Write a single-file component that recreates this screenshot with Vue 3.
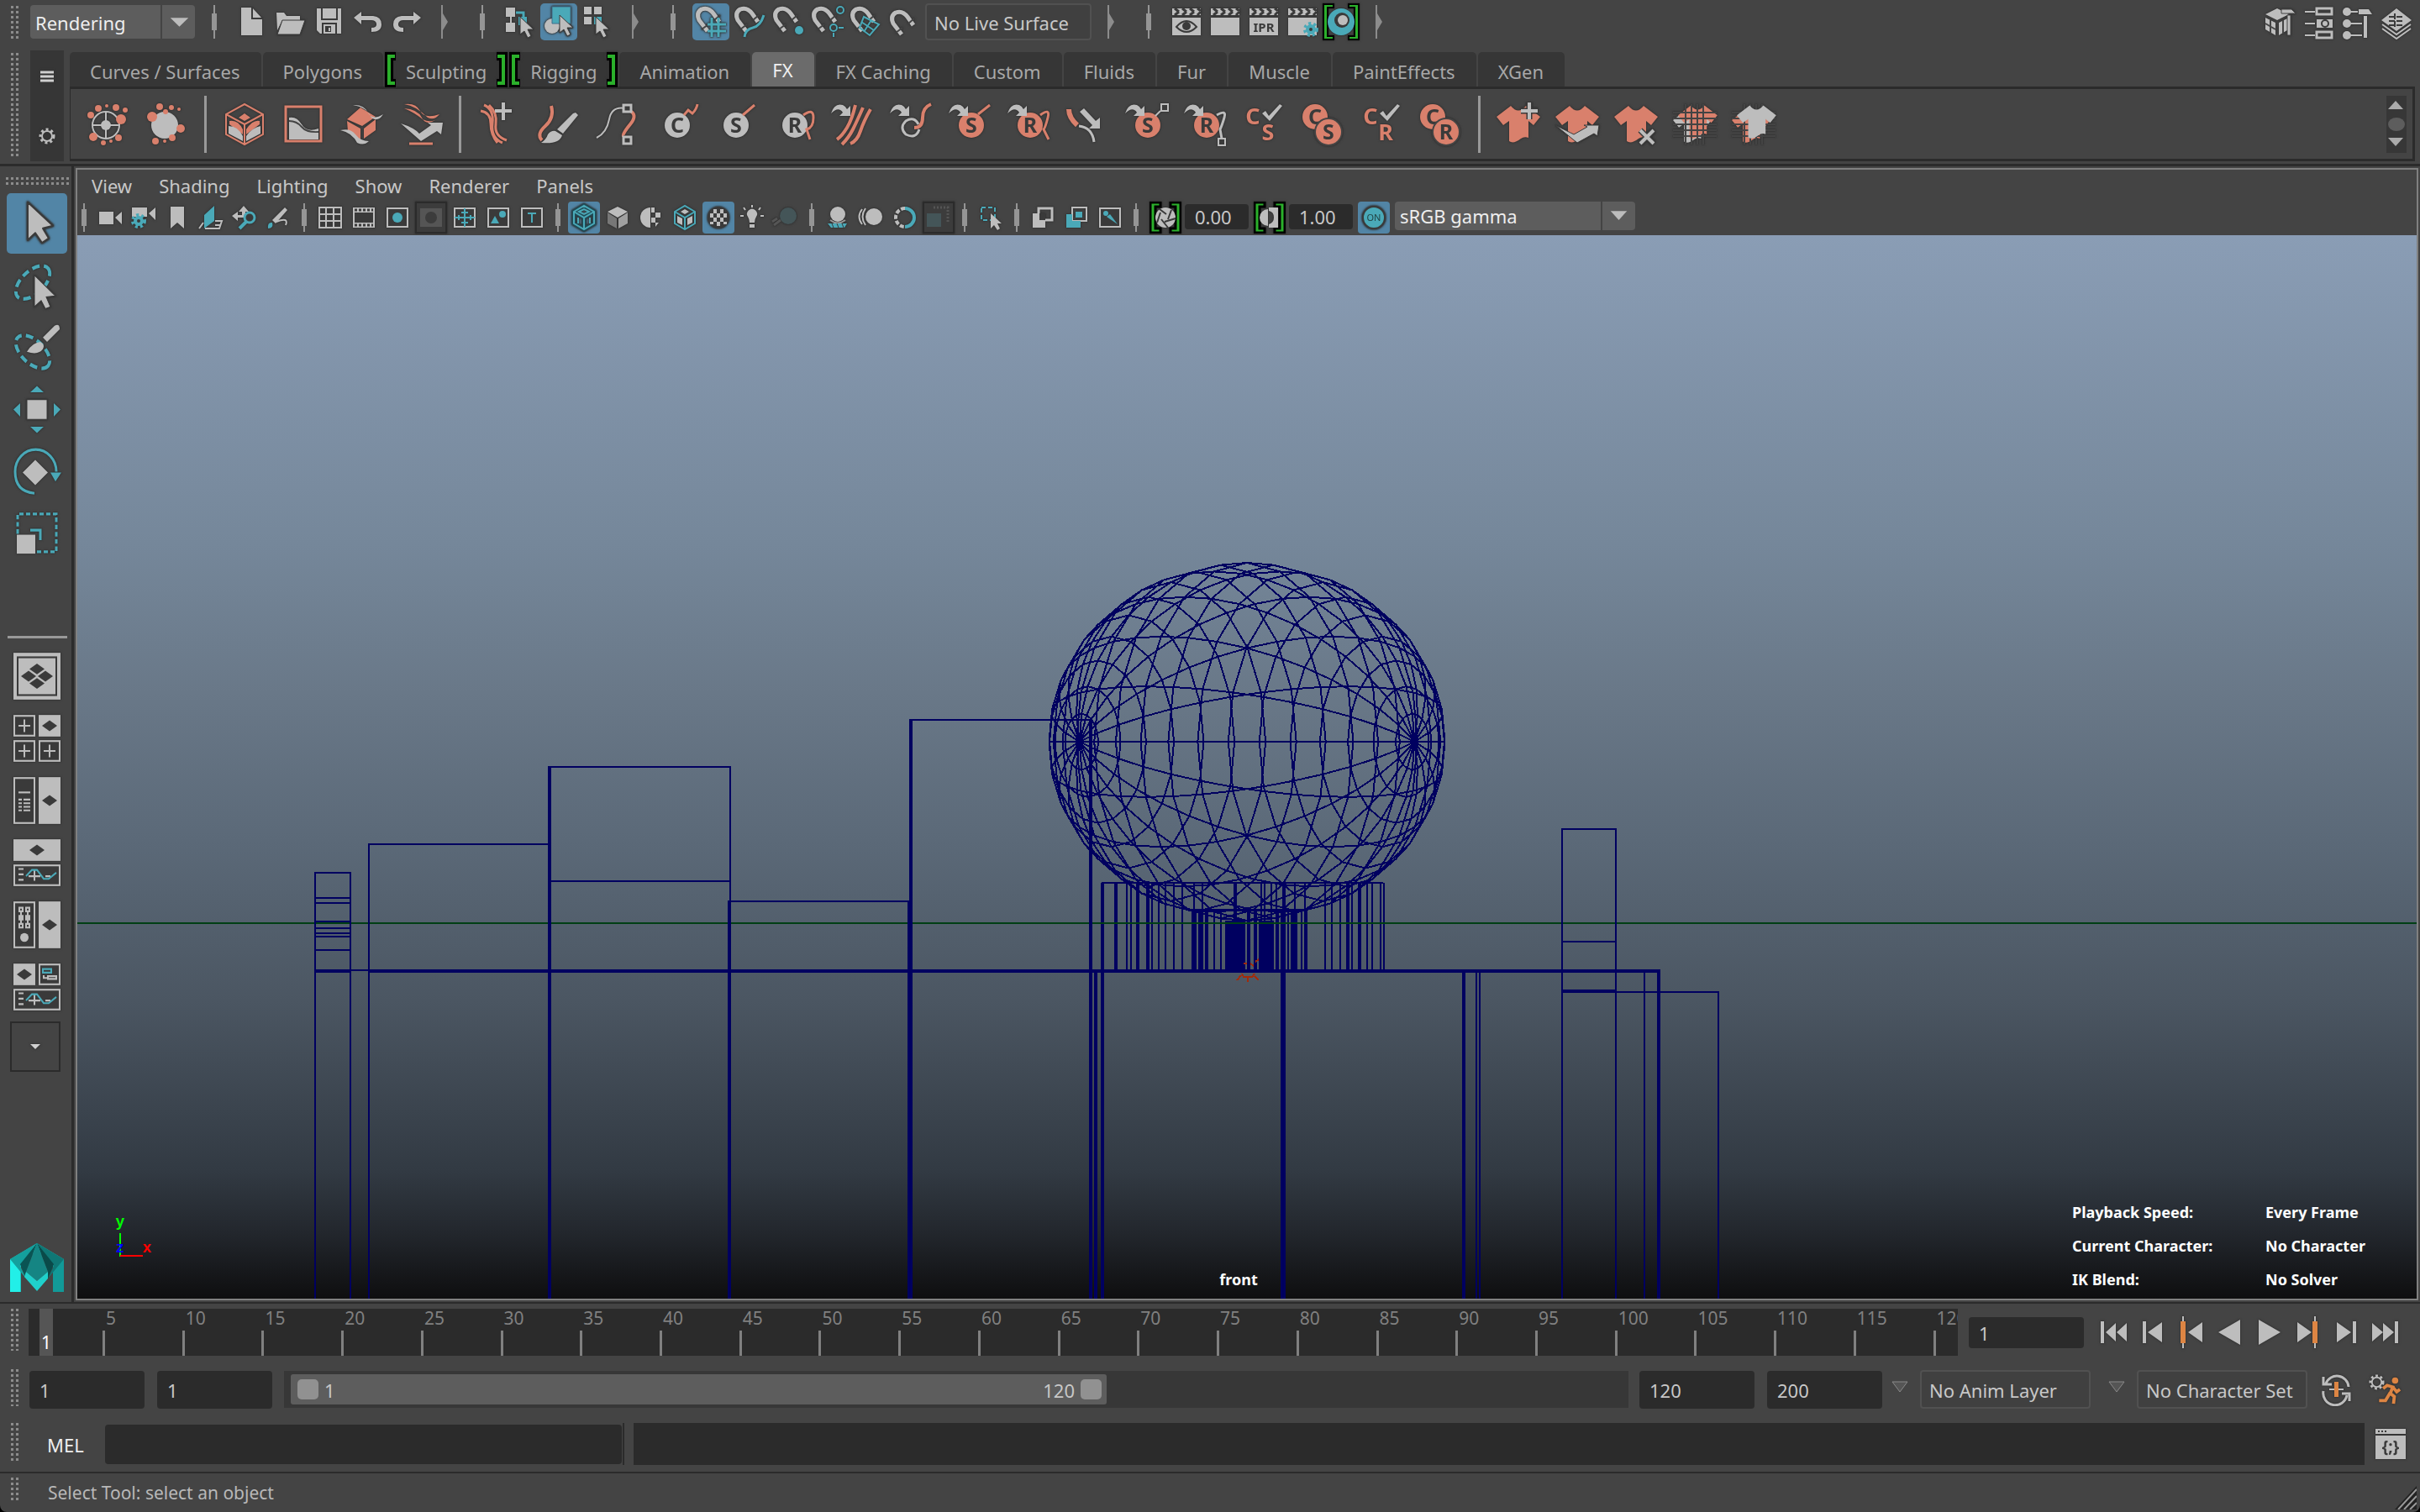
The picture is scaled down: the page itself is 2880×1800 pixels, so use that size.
<script setup>
import { ref } from 'vue'

const G = '#bdbdbd'
const T = '#4aa9b8'
const C = '#d9806c'
const D = '#3a3a3a'
const O = '#dd8543'

const badge = (cx, cy, color, letter, r = 15) =>
  `<circle cx="${cx}" cy="${cy}" r="${r}" fill="${color}"/><text x="${cx}" y="${cy + 9}" font-size="25" font-weight="700" text-anchor="middle" fill="${D}">${letter}</text>`
const letter = (x, y, l) =>
  `<text x="${x}" y="${y}" font-size="27" font-weight="700" text-anchor="middle" fill="${C}">${l}</text>`
const hook = `<path d="M1 13Q5 0 15 3Q19 5 20 8L24 4V16H11L15 12Q10 4 1 13Z" fill="${G}"/>`
const check = `<path d="M24 13L28 10L32 16L45 2L48 4L33 22Z" fill="${G}"/>`
const shirt = (color, t = '') =>
  `<path ${t} d="M17 4Q26 15 35 4L52 17L44 27L38 22V42Q33 40 29 43Q20 50 15 46V22L8 27L0 17Z" fill="${color}"/>`
const weave = 'M0 12H52M0 19H52M0 26H52M0 33H52M0 40H52M15 2V50M22 2V50M29 2V50M36 2V50'

const magnet = `<path d="M18 33L8 20Q4 11 11 7Q19 4 25 12L32 22" fill="none" stroke="${G}" stroke-width="5"/><path d="M11 31L19 25M26 20L33 14" stroke="#444" stroke-width="2"/>`
const clapper = `<path d="M5 17H39V38H5Z" fill="${G}"/><path d="M5 6H39V14H5Z" fill="${G}"/><path d="M8 6l5 4M17 6l5 4M26 6l5 4M35 6l4 3M13 10l-5 4M22 10l-5 4M31 10l-5 4M39 10l-4 4" stroke="${D}" stroke-width="3"/>`
const cursor = (x, y) => `<path transform="translate(${x} ${y})" d="M0 0V21L5 17L9 25L13 23L9 15H16Z" fill="${G}" stroke="${D}" stroke-width="1"/>`
const gear = (cx, cy, r, color, hole) =>
  `<circle cx="${cx}" cy="${cy}" r="${r + 1}" fill="none" stroke="${color}" stroke-width="4" stroke-dasharray="3 3"/><circle cx="${cx}" cy="${cy}" r="${r - 2}" fill="${hole}" stroke="${color}" stroke-width="4"/>`

const icons = {
  newFile: `<path d="M9 5H22L34 18V38H9Z" fill="${G}"/><path d="M22 5V18H34" fill="none" stroke="${D}" stroke-width="2"/>`,
  open: `<path d="M5 11H14L17 15H33V20H12L6 32Z" fill="${G}"/><path d="M12 20H39L33 37H6Z" fill="${G}" stroke="${D}"/>`,
  save: `<path d="M7 6H36V36H11L7 32Z" fill="${G}"/><path d="M13 6V19H31V6M14 36V24H30V36" fill="none" stroke="${D}" stroke-width="2"/><path d="M17 27H24V34H17Z" fill="${D}"/><path d="M21 29h2v4h-2z" fill="${G}"/>`,
  undo: `<path d="M5 17L14 10V15H28Q38 16 38 25Q38 34 26 34V29Q33 29 32 24Q31 20 26 20H14V25Z" fill="${G}"/>`,
  redo: `<path d="M39 17L30 10V15H16Q6 16 6 25Q6 34 18 34V29Q11 29 12 24Q13 20 18 20H30V25Z" fill="${G}"/>`,
  selHier: `<path d="M5 5H16V16H5ZM5 23H16V34H5ZM10 16H12V23H10Z" fill="${G}"/><path d="M17 11H26V18" fill="none" stroke="${T}" stroke-width="3"/><path d="M20 16H30V26H20Z" fill="${T}"/>${cursor(22, 16)}`,
  selObj: `<circle cx="14" cy="27" r="9" fill="${G}"/><path d="M14 4H36V24H14Z" fill="${T}" stroke="#3f6f8c" stroke-width="1"/>${cursor(23, 14)}`,
  selComp: `<path d="M6 4H15V13H6ZM18 4H27V13H18ZM6 16H15V25H6Z" fill="${G}"/><path d="M18 16H27V25H18Z" fill="${T}"/>${cursor(20, 16)}`,
  snapGrid: magnet + `<path d="M23 17V40M31 17V40M18 25H40M18 33H40" stroke="${T}" stroke-width="3"/>`,
  snapCurve: magnet + `<path d="M16 40Q17 31 26 29T39 14" fill="none" stroke="${T}" stroke-width="3"/>`,
  snapPoint: magnet + `<circle cx="35" cy="32" r="5" fill="${T}"/>`,
  snapProj: magnet + `<circle cx="38" cy="8" r="4" fill="none" stroke="${T}" stroke-width="2"/><circle cx="30" cy="29" r="4" fill="none" stroke="${T}" stroke-width="2"/><path d="M36 29H42M30 35V40" stroke="${T}" stroke-width="2"/>`,
  snapView: magnet + `<path d="M20 16L38 25L27 38L15 29ZM17 22L32 32M29 20L20 34" fill="none" stroke="${T}" stroke-width="2"/>`,
  live: `<g transform="translate(1 4)">${magnet}</g>`,
  renderView: clapper + `<path d="M10 28Q22 14 34 28Q22 40 10 28Z" fill="none" stroke="${D}" stroke-width="2"/><circle cx="22" cy="27" r="5" fill="${D}"/>`,
  render: clapper,
  ipr: clapper + `<text x="22" y="34" font-size="15" font-weight="700" text-anchor="middle" fill="${D}">IPR</text>`,
  renderSet: clapper + gear(32, 31, 6, T, D),
  hyper: `<path d="M1 1H13V5H6V39H13V43H1ZM43 1H31V5H38V39H31V43H43Z" fill="#2bb02b" stroke="#000" stroke-width="2"/><circle cx="22" cy="22" r="16" fill="${T}"/><circle cx="23" cy="20" r="9" fill="${D}"/><circle cx="24" cy="20" r="6" fill="${G}"/>`,
  model: `<path d="M4 13L18 6L32 13L18 20Z" fill="${G}"/><path d="M4 17L16 23V38L4 31ZM20 23L30 18V32L20 38Z" fill="${G}"/><path d="M10 20V36M4 24L16 31M25 20V36" stroke="#444" stroke-width="2"/><path d="M23 7H35L40 12H23ZM30 14H34V38H30Z" fill="${G}" stroke="#444" stroke-width="1"/>`,
  attr: `<path d="M5 10H17M5 24H17M5 38H17" stroke="${G}" stroke-width="2"/><path d="M19 6H37V13H19ZM19 34H37V41H19Z" fill="none" stroke="${G}" stroke-width="3"/><path d="M19 19H38V29H19Z" fill="${G}"/><circle cx="29" cy="24" r="4" fill="${G}" stroke="${D}" stroke-width="2"/>`,
  toolset: `<g fill="${G}"><circle cx="9" cy="10" r="5"/><circle cx="9" cy="24" r="5"/><circle cx="9" cy="38" r="5"/><path d="M13 9H22V11H13ZM13 23H27V25H13ZM13 37H27V39H13ZM23 7H35L39 13H23ZM29 15H33V41H29Z"/></g>`,
  layers: `<path d="M22 6L40 20L22 33L4 20Z" fill="${G}"/><path d="M5 25L22 37L39 25M5 30L22 42L39 30" fill="none" stroke="${G}" stroke-width="2"/><path d="M13 16H31M13 21H31M13 26H31M20 12V29" stroke="${D}" stroke-width="2" stroke-dasharray="7 2"/>`,

  emitter: `<circle cx="24" cy="27" r="16" fill="none" stroke="${G}" stroke-width="2"/><path d="M24 11V43M8 27H40" stroke="${G}" stroke-width="2"/><circle cx="24" cy="27" r="6" fill="${G}"/><g fill="${C}"><circle cx="6" cy="15" r="4"/><circle cx="15" cy="7" r="4"/><circle cx="25" cy="4" r="2"/><circle cx="36" cy="6" r="4"/><circle cx="47" cy="9" r="3"/><circle cx="42" cy="20" r="6"/><circle cx="9" cy="41" r="5"/><circle cx="21" cy="48" r="3"/><circle cx="30" cy="46" r="2"/><circle cx="39" cy="42" r="4"/></g>`,
  emitObj: `<circle cx="24" cy="27" r="16" fill="${G}"/><g fill="${C}"><circle cx="9" cy="17" r="6"/><circle cx="18" cy="5" r="4"/><circle cx="25" cy="11" r="3"/><circle cx="32" cy="6" r="3"/><circle cx="41" cy="8" r="2"/><circle cx="43" cy="31" r="5"/><circle cx="13" cy="46" r="4"/><circle cx="24" cy="46" r="2"/><circle cx="33" cy="42" r="4"/></g>`,
  fluidBox: `<path d="M4 14V38L26 50L48 38V14L26 2ZM4 14L26 26L48 14M26 26V50" fill="none" stroke="${C}" stroke-width="2"/><path d="M26 13L33 18L26 22L19 18ZM8 22Q18 20 24 32V38L8 26ZM44 22Q36 20 28 32V38L44 26Z" fill="${C}"/><path d="M7 28Q18 28 24 40V46L7 37ZM45 28Q35 30 28 40V46L45 37Z" fill="${G}"/>`,
  pond: `<rect x="5" y="5" width="42" height="41" fill="none" stroke="${C}" stroke-width="3"/><path d="M9 18Q18 16 24 26T44 31V44H9Z" fill="${G}"/><path d="M9 22Q18 22 24 29T44 35" fill="none" stroke="#444" stroke-width="2"/>`,
  fluidObj: `<path d="M8 20L24 6L42 17L26 28ZM8 22L24 31V44L9 35ZM28 31L42 20V33L28 43Z" fill="${C}"/><path d="M15 3Q28 2 33 12T51 14Q45 24 37 18Q32 6 15 3ZM0 33Q12 30 18 38T34 46Q28 52 20 48Q14 36 0 33Z" fill="${G}"/>`,
  collide: `<path d="M6 2Q20 0 25 10T48 14Q42 22 34 18Q20 4 6 2ZM6 7Q22 8 27 18T43 21Q36 24 28 20Q18 12 6 7Z" fill="${C}"/><path d="M2 25Q18 30 24 37L38 27L34 24L52 24L50 38L45 34L26 46Z" fill="${G}"/><path d="M12 49H40" stroke="${C}" stroke-width="3"/>`,
  hairPlus: `<path d="M8 3Q20 8 18 25T30 48M14 3Q24 12 22 26T35 45M4 10Q16 12 16 25T24 48" fill="none" stroke="${C}" stroke-width="3"/><path d="M31 0V21M21 10H41" stroke="${G}" stroke-width="4"/>`,
  paintHair: `<path d="M18 4Q22 18 11 28T7 45" fill="none" stroke="${C}" stroke-width="4"/><path d="M47 12L50 15L32 37L25 32L44 13Z" fill="${G}"/><path d="M23 34L31 39Q28 50 6 48Q12 44 14 38Q18 33 23 34Z" fill="${G}"/>`,
  hairPt: `<path d="M2 42Q14 36 17 20T36 7" fill="none" stroke="${G}" stroke-width="2"/><path d="M40 9Q52 14 42 26T34 40" fill="none" stroke="${C}" stroke-width="4"/><path d="M34 3H43V11H34ZM34 41H43V49H34Z" fill="${D}" stroke="${G}" stroke-width="3"/>`,
  cNew: badge(28, 27, G, 'C') + `<path d="M36 15L41 9L46 13Q51 8 52 2" fill="none" stroke="${C}" stroke-width="3"/>`,
  sNew: badge(28, 27, G, 'S') + `<path d="M36 15L50 3" stroke="${C}" stroke-width="3"/>`,
  rNew: badge(28, 27, G, 'R') + `<path d="M38 15Q50 6 50 18T42 32L46 44" fill="none" stroke="${C}" stroke-width="3"/>`,
  hairCollide: hook + `<path d="M30 3Q26 20 20 30T8 44M39 6Q32 22 27 32T14 50M48 8Q40 22 36 34T24 49" fill="none" stroke="${C}" stroke-width="4"/>`,
  curlGet: hook + `<path d="M50 2Q40 6 40 18T30 30" fill="none" stroke="${C}" stroke-width="4"/><path d="M36 32Q32 44 20 38Q12 30 20 22Q30 16 35 26" fill="none" stroke="${G}" stroke-width="3"/>`,
  sGet: badge(28, 27, C, 'S') + `<path d="M36 14L50 3" stroke="${C}" stroke-width="3"/>` + hook,
  rGet: badge(28, 27, C, 'R') + `<path d="M40 15Q52 6 49 18T44 32L50 44" fill="none" stroke="${C}" stroke-width="3"/>` + hook,
  hairDir: `<path d="M4 8Q4 18 14 27" fill="none" stroke="${C}" stroke-width="6"/><path d="M16 28Q32 30 34 47" fill="none" stroke="${G}" stroke-width="3"/><path d="M22 7L36 22L41 18V31H28L32 27L17 11Z" fill="${G}"/>`,
  sBox: badge(28, 27, C, 'S') + `<path d="M37 16L43 10M44 2H52V10H44Z" fill="${D}" stroke="${G}" stroke-width="2"/>` + hook,
  rBox: badge(28, 27, C, 'R') + `<path d="M40 15Q52 8 49 18T44 32L46 43" fill="none" stroke="${G}" stroke-width="3"/><path d="M42 43H50V51H42Z" fill="${D}" stroke="${G}" stroke-width="2"/>` + hook,
  cCheckS: letter(13, 26, 'C') + letter(31, 45, 'S') + check,
  cS: badge(17, 17, C, 'C') + `<circle cx="33" cy="35" r="17" fill="#444"/>` + badge(33, 35, C, 'S'),
  cCheckR: letter(13, 26, 'C') + letter(31, 45, 'R') + check,
  cR: badge(17, 17, C, 'C') + `<circle cx="33" cy="35" r="17" fill="#444"/>` + badge(33, 35, C, 'R'),
  shirtAdd: shirt(C) + `<path d="M39 0V20M29 10H49" stroke="${D}" stroke-width="7"/><path d="M39 0V20M29 10H49" stroke="${G}" stroke-width="4"/>`,
  shirtCollide: shirt(C) + `<path d="M0 27Q14 34 22 38L38 29L34 27L52 27L50 40L46 37L26 48Z" fill="${G}" stroke="${D}" stroke-width="1"/>`,
  shirtDel: shirt(C) + `<path d="M31 33L47 49M47 33L31 49" stroke="${D}" stroke-width="7"/><path d="M31 33L47 49M47 33L31 49" stroke="${G}" stroke-width="4"/>`,
  shirtWeave: shirt(G, 'transform="translate(0 6) scale(.88)"') + `<g transform="translate(6 0) scale(.9)">${shirt(C)}</g><path d="${weave}" stroke="#444" stroke-width="2"/>`,
  shirtWeaveBack: `<g transform="translate(0 6) scale(.88)">${shirt(C)}</g><path d="${weave}" stroke="#444" stroke-width="2"/>` + shirt(G, 'transform="translate(6 0) scale(.9)"'),

  cam: `<path d="M6 12H23V27H6ZM25 19L33 12V27Z" fill="${G}"/>`,
  camSet: `<path d="M5 7H23V18H5ZM25 14L33 7V22Z" fill="${G}"/>` + gear(13, 23, 6, T, D),
  bookmark: `<path d="M11 6H27V32L19 25L11 32Z" fill="${G}"/>`,
  plane: `<path d="M11 16L23 5V23L11 32Z" fill="${T}"/><path d="M5 32L10 25M12 32H29L32 23H24M24 28H30" fill="none" stroke="${G}" stroke-width="2"/>`,
  pan: `<path d="M18 5L24 12H20V19H11V23L4 17L11 12V16H16V12H12Z" fill="${G}"/><circle cx="25" cy="19" r="6" fill="${D}" stroke="${T}" stroke-width="3"/><path d="M21 24L13 32" stroke="${T}" stroke-width="4"/>`,
  pencil: `<path d="M27 7L30 10L16 26L12 22Z" fill="${G}"/><path d="M17 24Q32 18 28 28" fill="none" stroke="${G}" stroke-width="2"/><path d="M7 32Q6 24 12 25Q14 32 7 32Z" fill="${T}"/>`,
  grid: `<path d="M6 7H32V31H6ZM6 15H32M6 23H32M14 7V31M23 7V31" fill="${D}" stroke="${G}" stroke-width="2"/>`,
  film: `<path d="M6 7H32V31H6Z" fill="${G}"/><path d="M8 13H30V25H8Z" fill="${D}"/><path d="M8 10H30M8 28H30" stroke="${D}" stroke-width="3" stroke-dasharray="3 2"/>`,
  resGate: `<path d="M7 8H31V30H7Z" fill="${D}" stroke="${G}" stroke-width="2"/><circle cx="19" cy="19" r="6" fill="${T}"/>`,
  gateMask: `<path d="M1 1H37V37H1Z" fill="#3c3c3c" stroke="#2b2b2b" stroke-width="2"/><path d="M6 8H32V30H6Z" fill="#555"/><circle cx="19" cy="19" r="7" fill="#3c3c3c"/>`,
  fieldChart: `<path d="M7 8H31V30H7Z" fill="${D}" stroke="${G}" stroke-width="2"/><path d="M19 8V30M7 19H31M15 13H23M15 25H23M12 16V22M26 16V22" stroke="${T}" stroke-width="2"/>`,
  safeAct: `<path d="M7 8H31V30H7Z" fill="${D}" stroke="${G}" stroke-width="2"/><circle cx="24" cy="15" r="4" fill="${T}"/><path d="M10 26L15 17L20 26Z" fill="${T}"/>`,
  safeTitle: `<path d="M7 8H31V30H7Z" fill="${D}" stroke="${G}" stroke-width="2"/><path d="M14 14H24M19 14V25" stroke="${T}" stroke-width="2"/>`,
  wire: `<path d="M7 12L19 5L31 12V26L19 33L7 26ZM7 12L19 19L31 12M19 19V33" fill="none" stroke="#204b57" stroke-width="5"/><path d="M7 12L19 5L31 12V26L19 33L7 26ZM7 12L19 19L31 12M19 19V33M13 12L19 9L25 12L19 15ZM12 19V26M26 19V26" fill="none" stroke="${T}" stroke-width="2"/>`,
  smooth: `<path d="M19 6L31 12L19 19L7 12Z" fill="${G}"/><path d="M7 13L18 20V32L7 26Z" fill="#777"/><path d="M31 13L20 20V32L31 26Z" fill="#a0a0a0"/>`,
  halfTex: `<path d="M18 7A12 12 0 0 0 18 31Z" fill="${G}"/><path d="M19 7H23V13H19ZM24 13H30V19H24ZM19 19H24V25H19ZM24 25H28L24 30Z" fill="${G}"/>`,
  texCube: `<path d="M7 12L19 5L31 12V26L19 33L7 26ZM7 12L19 19L31 12M19 19V33" fill="none" stroke="${T}" stroke-width="2"/><path d="M14 12L19 9L24 12L19 15ZM10 17L16 20V28L10 25ZM22 20L28 17V25L22 28Z" fill="${G}"/>`,
  checker: `<circle cx="19" cy="19" r="13" fill="${D}"/><path d="M13 9h4v5h-4zM21 9h4v5h-4zM9 14h4v5h-4zM17 14h4v5h-4zM25 14h4v5h-4zM13 19h4v5h-4zM21 19h4v5h-4zM9 24h4v3h-4zM17 24h4v5h-4zM25 24h4v3h-4z" fill="${G}"/>`,
  bulb: `<path d="M14 18A6 6 0 1 1 24 18Q22 21 22 25H16Q16 21 14 18ZM16 27H22V31H16Z" fill="${G}"/><path d="M19 4V7M9 7L11 10M29 7L27 10M5 17H9M29 17H33" stroke="${G}" stroke-width="2"/>`,
  dimSphere: `<circle cx="22" cy="17" r="10" fill="#445558"/><path d="M3 24l6-4M5 28l8-6" stroke="#555" stroke-width="3"/>`,
  shadow: `<circle cx="19" cy="15" r="9" fill="${G}"/><path d="M10 22Q19 29 28 22" stroke="#999" stroke-width="2" fill="none"/><path d="M7 26H30L27 31H11Z" fill="${T}"/><path d="M12 26l2 5M18 26l2 5M24 26l2 5" stroke="${D}"/>`,
  motion: `<circle cx="22" cy="18" r="10" fill="${G}"/><path d="M12 8Q5 18 12 28M8 9Q1 18 8 27" fill="none" stroke="${G}" stroke-width="2"/>`,
  aa: `<path d="M19 8A11 11 0 0 0 19 30" fill="none" stroke="${G}" stroke-width="4" stroke-dasharray="5 2"/><path d="M19 8A11 11 0 0 1 19 30" fill="none" stroke="${T}" stroke-width="4"/>`,
  dof: `<path d="M1 1H37V37H1Z" fill="#3c3c3c" stroke="#2b2b2b" stroke-width="2"/><path d="M5 14H22V30H5Z" fill="#445558"/><path d="M13 7H30V26" fill="none" stroke="#555" stroke-width="3" stroke-dasharray="2 2"/>`,
  isolate: `<path d="M8 7H24V22H8Z" fill="none" stroke="${T}" stroke-width="2" stroke-dasharray="5 3"/><path d="M19 14V32L23 28L27 34L30 32L27 26H32Z" fill="${G}"/>`,
  xray: `<path d="M14 8H30V22H14Z" fill="none" stroke="${G}" stroke-width="3"/><path d="M7 14H22V31H7Z" fill="${G}"/><path d="M15 14H22V22H15Z" fill="${D}"/>`,
  xrayJoint: `<path d="M14 7H31V23H14Z" fill="none" stroke="${G}" stroke-width="2"/><path d="M7 15H14V23H24V31H7Z" fill="${T}"/><path d="M18 12H26V19H18Z" fill="${T}"/>`,
  xrayActive: `<path d="M7 8H31V30H7Z" fill="${D}" stroke="${G}" stroke-width="2"/><circle cx="14" cy="14" r="3" fill="${T}"/><path d="M15 18L19 15L28 27Z" fill="${T}"/>`,
  exposure: `<path d="M1 1H13V6H7V32H13V37H1ZM37 1H25V6H31V32H25V37H37Z" fill="#2bb02b" stroke="#000" stroke-width="3"/><circle cx="19" cy="19" r="12" fill="${G}"/><path d="M12 9L20 15M26 10L22 21M31 20L18 24M22 31L14 21M9 25L13 13" stroke="${D}" stroke-width="2"/>`,
  gamma: `<path d="M1 1H13V6H7V32H13V37H1ZM37 1H25V6H31V32H25V37H37Z" fill="#2bb02b" stroke="#000" stroke-width="3"/><path d="M17 9A10 10 0 0 0 17 29Z" fill="${G}"/><path d="M18 7H29V31H18V27Q24 25 24 19Q24 12 18 11Z" fill="${G}"/>`,
  on: `<circle cx="19" cy="19" r="13" fill="${T}" stroke="${D}" stroke-width="2"/><text x="19" y="23" font-size="11" text-anchor="middle" fill="#244">ON</text>`,

  select: `<path d="M25 10V52L34 44L42 55L50 50L43 39L55 36Z" fill="${G}" stroke="${D}" stroke-width="2" stroke-linejoin="round"/>`,
  lasso: `<ellipse cx="31" cy="30" rx="24" ry="13" transform="rotate(-40 31 30)" fill="none" stroke="${T}" stroke-width="4" stroke-dasharray="9 5"/><path d="M33 22V57L41 50L46 59L52 57L47 46L58 45Z" fill="${G}" stroke="${D}" stroke-width="1"/>`,
  paintSel: `<ellipse cx="31" cy="38" rx="24" ry="13" transform="rotate(40 31 38)" fill="none" stroke="${T}" stroke-width="4" stroke-dasharray="9 5"/><path d="M43 22L57 9Q63 6 63 13L48 27Z" fill="${G}"/><path d="M24 38Q30 28 40 27Q46 30 43 35Q38 42 24 38Z" fill="${G}"/>`,
  move: `<path d="M24 22H48V44H24Z" fill="${G}" stroke="${D}" stroke-width="1"/><path d="M36 7L44 14H28ZM36 59L44 52H28ZM8 33L16 26V41ZM64 33L56 26V41Z" fill="${T}"/>`,
  rotate: `<path d="M33 57Q10 55 10 33A24 24 0 0 1 59 33" fill="none" stroke="${T}" stroke-width="3"/><path d="M52 34H65L58 44Z" fill="${T}"/><path d="M34 20L49 34L34 48L19 34Z" fill="${G}"/>`,
  scale: `<path d="M13 33V11H59V53H34" fill="none" stroke="${T}" stroke-width="3" stroke-dasharray="5 3"/><path d="M28 29H40V40" fill="none" stroke="${T}" stroke-width="3"/><path d="M12 34H34V55H12Z" fill="${G}"/>`,

  first: `<path d="M6 7H10V33H6ZM12 20L24 9V31ZM25 20L37 9V31Z" fill="${G}"/>`,
  prev: `<path d="M10 7H14V33H10ZM16 20L33 8V32Z" fill="${G}"/>`,
  prevKey: `<path d="M11 1H13V39H11Z" fill="${G}"/><path d="M9 7H15V33H9Z" fill="${O}"/><path d="M18 20L35 8V32Z" fill="${G}"/>`,
  playBack: `<path d="M8 20L34 5V35Z" fill="${G}"/>`,
  play: `<path d="M36 20L10 5V35Z" fill="${G}"/>`,
  nextKey: `<path d="M30 1H32V39H30Z" fill="${G}"/><path d="M28 7H34V33H28Z" fill="${O}"/><path d="M27 20L10 8V32Z" fill="${G}"/>`,
  next: `<path d="M30 7H34V33H30ZM28 20L11 8V32Z" fill="${G}"/>`,
  last: `<path d="M34 7H38V33H34ZM20 20L7 9V31ZM33 20L20 9V31Z" fill="${G}"/>`,
  autoKey: `<path d="M8 13A14 14 0 0 1 35 17M5 5V14H15M33 27A14 14 0 0 1 5 22M36 34V25H27" fill="none" stroke="${G}" stroke-width="3"/><path d="M12 19H29V21H12Z" fill="${G}"/><path d="M18 11H23V29H18Z" fill="${O}"/>`,
  prefs: `<circle cx="11" cy="11" r="8" fill="none" stroke="${G}" stroke-width="3" stroke-dasharray="3 3"/><circle cx="11" cy="11" r="6" fill="none" stroke="${G}" stroke-width="2"/><circle cx="34" cy="9" r="4" fill="${O}"/><path d="M19 19L24 15L31 17L28 25L33 29L32 38M28 24L22 34H14M31 17L36 23L40 20" fill="none" stroke="${O}" stroke-width="4"/>`,
  script: `<path d="M1 1H37V7H1ZM1 9H37V37H1Z" fill="${G}"/><path d="M4 3h2v2h-2zM8 3h2v2h-2zM12 3h2v2h-2z" fill="${D}"/><text x="19" y="29" font-size="19" font-weight="700" text-anchor="middle" fill="${D}">{;}</text>`,
}

const dia = (x, y) => `<path d="M${x - 9} ${y}L${x} ${y - 6}L${x + 9} ${y}L${x} ${y + 6}Z" fill="${D}"/>`
const cell = (x, y, w, h) => `<rect x="${x + 1}" y="${y + 1}" width="${w - 2}" height="${h - 2}" fill="${D}" stroke="${G}" stroke-width="2"/>`
const solid = (x, y, w, h) => `<rect x="${x}" y="${y}" width="${w}" height="${h}" fill="${G}"/>`
const plus = (x, y) => `<path d="M${x - 7} ${y}H${x + 7}M${x} ${y - 7}V${y + 7}" stroke="${G}" stroke-width="2"/>`
const graph = `<path d="M8 35H14M8 41H14M8 47H14M20 43H34M27 36V48M40 43H46" stroke="${G}" stroke-width="2"/><path d="M17 43L24 36H30L38 46H44L53 39" fill="none" stroke="${T}" stroke-width="2"/>`
const layouts = [
  { name: 'Single perspective view', art: solid(2, 2, 56, 52) + `<rect x="7" y="7" width="46" height="42" fill="none" stroke="${D}" stroke-width="2"/><g transform="translate(0 -1)">${dia(30, 21)}${dia(20, 29)}${dia(40, 29)}${dia(30, 37)}</g>` },
  { name: 'Four view', art: cell(2, 2, 26, 24) + solid(32, 2, 26, 24) + cell(2, 30, 26, 24) + cell(32, 30, 26, 24) + plus(15, 14) + dia(45, 14) + plus(15, 42) + plus(45, 42) },
  { name: 'Outliner and perspective', art: cell(2, 2, 26, 52) + solid(32, 2, 26, 52) + dia(45, 28) + `<path d="M8 19H22" stroke="${G}" stroke-width="2"/><path d="M8 27H22M8 31H22M8 35H22M8 39H22" stroke="${G}" stroke-width="2" stroke-dasharray="4 2 8"/>` },
  { name: 'Perspective and graph', art: solid(2, 2, 56, 24) + dia(30, 14) + cell(2, 30, 56, 24) + graph },
  { name: 'Hypershade and perspective', art: cell(2, 2, 26, 52) + solid(32, 2, 26, 52) + dia(45, 28) + `<path d="M9 9h4v4h-4zM17 9h4v4h-4zM9 18h4v4h-4zM17 18h4v4h-4zM9 27h4v4h-4zM17 27h4v4h-4zM11 13v14M19 13v14" fill="none" stroke="${G}" stroke-width="2"/><circle cx="15" cy="42" r="5" fill="${G}"/>` },
  { name: 'Perspective, graph and hypergraph', art: solid(2, 2, 26, 24) + dia(15, 14) + cell(32, 2, 26, 24) + cell(2, 30, 56, 24) + graph + `<path d="M37 8H47V12H37Z" fill="none" stroke="${T}" stroke-width="2"/><path d="M43 16H53V19H43ZM38 15V18H43" fill="none" stroke="${G}" stroke-width="2"/>` },
]

const fileTools = ['newFile', 'open', 'save', 'undo', 'redo']
const selTools = ['selHier', 'selObj', 'selComp']
const snapTools = ['snapGrid', 'snapCurve', 'snapPoint', 'snapProj', 'snapView', 'live']
const renderTools = ['renderView', 'render', 'ipr', 'renderSet', 'hyper']
const panelToggles = ['model', 'attr', 'toolset', 'layers']

const tabs = ['Curves / Surfaces', 'Polygons', 'Sculpting', 'Rigging', 'Animation', 'FX', 'FX Caching', 'Custom', 'Fluids', 'Fur', 'Muscle', 'PaintEffects', 'XGen']
const bracketed = ['Sculpting', 'Rigging']
const activeTab = ref('FX')
const shelfGroups = [
  ['emitter', 'emitObj'],
  ['fluidBox', 'pond', 'fluidObj', 'collide'],
  ['hairPlus', 'paintHair', 'hairPt', 'cNew', 'sNew', 'rNew', 'hairCollide', 'curlGet', 'sGet', 'rGet', 'hairDir', 'sBox', 'rBox', 'cCheckS', 'cS', 'cCheckR', 'cR'],
  ['shirtAdd', 'shirtCollide', 'shirtDel', 'shirtWeave', 'shirtWeaveBack'],
]
const panelMenus = ['View', 'Shading', 'Lighting', 'Show', 'Renderer', 'Panels']
const viewGroups = [
  ['cam', 'camSet', 'bookmark', 'plane', 'pan', 'pencil'],
  ['grid', 'film', 'resGate', 'gateMask', 'fieldChart', 'safeAct', 'safeTitle'],
  ['wire', 'smooth', 'halfTex', 'texCube', 'checker', 'bulb', 'dimSphere'],
  ['shadow', 'motion', 'aa', 'dof'],
  ['isolate'],
  ['xray', 'xrayJoint', 'xrayActive'],
]
const active = ['selObj', 'snapGrid', 'wire', 'checker', 'on', 'select']
const tools = ['select', 'lasso', 'paintSel', 'move', 'rotate', 'scale']
const playback = ['first', 'prev', 'prevKey', 'playBack', 'play', 'nextKey', 'next', 'last']
const frames = Array.from({ length: 24 }, (_, i) => (i + 1) * 5)

// Ellipsoid wireframe: 20 meridians, 20 height divisions, polar axis turned away from the view plane
const sphere = (() => {
  const cx = 1484, cy = 883, rx = 236, ry = 213, tilt = (57.6 * Math.PI) / 180
  const rad = Math.PI / 180
  const pt = (lat, lon) => {
    const a = lat * rad, b = lon * rad
    const x = Math.sin(a) * Math.sin(tilt) + Math.cos(a) * Math.cos(b) * Math.cos(tilt)
    const y = Math.cos(a) * Math.sin(b)
    return `${(cx + rx * x).toFixed(1)} ${(cy - ry * y).toFixed(1)}`
  }
  let d = ''
  for (let lat = -81; lat <= 81; lat += 9) {
    d += 'M' + Array.from({ length: 20 }, (_, i) => pt(lat, i * 18)).join('L') + 'Z'
  }
  for (let lon = 0; lon < 360; lon += 18) {
    d += 'M' + Array.from({ length: 21 }, (_, i) => pt(-90 + i * 9, lon)).join('L')
  }
  return d
})()

// [left, width] of each rib
const ribs = [[1310, 4], [1326, 4], [1340, 2], [1345, 2], [1352, 4], [1364, 4], [1370, 2], [1378, 2], [1386, 2], [1396, 2], [1406, 2], [1576, 2], [1584, 2], [1594, 2], [1602, 4], [1608, 2], [1616, 4], [1626, 2], [1632, 2], [1642, 2], [1646, 2], [1420, 2], [1430, 2], [1468, 4], [1500, 2], [1504, 2], [1512, 2], [1518, 2], [1526, 4], [1540, 2], [1552, 2]]
const core = [[1418, 6], [1426, 6], [1434, 4], [1444, 2], [1452, 2], [1458, 24], [1484, 4], [1492, 4], [1498, 18], [1518, 4], [1524, 6], [1532, 2], [1536, 8], [1548, 2], [1552, 4]]
// [x, y, width, height]
const blocks = [
  [375, 1038, 42, 2], [375, 1068, 42, 2], [375, 1074, 42, 2], [375, 1096, 42, 2], [375, 1104, 42, 2], [375, 1110, 42, 2], [375, 1114, 42, 2], [375, 1130, 42, 2],
  [374, 1038, 2, 508], [416, 1038, 2, 508], [374, 1154, 43, 4], [417, 1154, 21, 2], [438, 1154, 1538, 4],
  [438, 1004, 216, 2], [438, 1004, 2, 542], [652, 912, 4, 634], [652, 912, 218, 2], [652, 1048, 218, 2], [868, 912, 2, 160],
  [866, 1072, 4, 474], [866, 1072, 216, 2], [1082, 856, 4, 690], [1080, 1072, 4, 474], [1082, 856, 218, 2], [1296, 856, 4, 690],
  [1302, 1156, 4, 390], [1310, 1156, 4, 390], [1524, 1156, 6, 390], [1740, 1156, 4, 390], [1756, 1156, 2, 390], [1760, 1156, 2, 390],
  [1858, 986, 2, 560], [1922, 986, 2, 560], [1858, 986, 66, 2], [1858, 1120, 66, 2], [1858, 1178, 66, 4], [1924, 1180, 122, 2],
  [1956, 1156, 2, 390], [1972, 1154, 4, 392], [2044, 1180, 2, 366],
]
</script>

<template>
  <div class="app">
    <header class="status-line">
      <i class="grip"></i>
      <div class="combo mode">
        <select aria-label="Menu set"><option>Rendering</option></select>
        <svg viewBox="0 0 40 40"><path d="M10 15H32L21 26Z" fill="#bdbdbd" /></svg>
      </div>
      <i class="bar"></i>
      <div class="group"><button v-for="n in fileTools" :key="n" class="tb" :aria-label="n"><svg viewBox="0 0 44 44" v-html="icons[n]"></svg></button></div>
      <i class="chev"></i><i class="bar"></i>
      <div class="group"><button v-for="n in selTools" :key="n" class="tb" :class="{ on: active.includes(n) }" :aria-label="n"><svg viewBox="0 0 44 44" v-html="icons[n]"></svg></button></div>
      <i class="chev"></i><i class="bar"></i>
      <div class="group"><button v-for="n in snapTools" :key="n" class="tb" :class="{ on: active.includes(n) }" :aria-label="n"><svg viewBox="0 0 44 44" v-html="icons[n]"></svg></button></div>
      <button class="outlined live">No Live Surface</button>
      <i class="chev"></i><i class="bar"></i>
      <div class="group"><button v-for="n in renderTools" :key="n" class="tb" :aria-label="n"><svg viewBox="0 0 44 44" v-html="icons[n]"></svg></button></div>
      <i class="chev"></i>
      <div class="group end"><button v-for="n in panelToggles" :key="n" class="tb" :aria-label="n"><svg viewBox="0 0 44 44" v-html="icons[n]"></svg></button></div>
    </header>

    <section class="shelf">
      <i class="grip"></i>
      <div class="shelf-side">
        <button aria-label="Shelf menu"><svg viewBox="0 0 20 20"><path d="M2 4H18M2 9H18M2 14H18" stroke="#d0d0d0" stroke-width="3" /></svg></button>
        <button aria-label="Shelf settings"><svg viewBox="0 0 20 20"><circle cx="10" cy="10" r="8" fill="none" stroke="#bdbdbd" stroke-width="3" stroke-dasharray="3 3" /><circle cx="10" cy="10" r="6" fill="none" stroke="#bdbdbd" stroke-width="2" /></svg></button>
      </div>
      <div class="shelf-main">
        <div class="tabs" role="tablist">
          <button v-for="t in tabs" :key="t" role="tab" class="tab" :class="{ current: t === activeTab, marked: bracketed.includes(t) }" @click="activeTab = t">
            <svg v-if="bracketed.includes(t)" class="bracket" viewBox="0 0 14 42"><path d="M13 5H5V37H13" fill="none" stroke="#000" stroke-width="10" /><path d="M12 5H5V37H12" fill="none" stroke="#2bb02b" stroke-width="4" /></svg>
            <span>{{ t }}</span>
            <svg v-if="bracketed.includes(t)" class="bracket" viewBox="0 0 14 42"><path d="M1 5H9V37H1" fill="none" stroke="#000" stroke-width="10" /><path d="M2 5H9V37H2" fill="none" stroke="#2bb02b" stroke-width="4" /></svg>
          </button>
        </div>
        <div class="shelf-body">
          <div v-for="(g, i) in shelfGroups" :key="i" class="shelf-group">
            <button v-for="n in g" :key="n" :aria-label="n"><svg viewBox="0 0 52 52" v-html="icons[n]"></svg></button>
          </div>
          <div class="scroller"><svg viewBox="0 0 24 68"><path d="M2 16H20L11 6ZM2 50H20L11 60Z" fill="#ababab" /><ellipse cx="12" cy="34" rx="10" ry="8" fill="#5d5d5d" /></svg></div>
        </div>
      </div>
    </section>

    <main class="work">
      <aside class="toolbox">
        <i class="grip flat"></i>
        <button v-for="n in tools" :key="n" class="tool" :class="{ on: active.includes(n) }" :aria-label="n"><svg viewBox="0 0 72 67" preserveAspectRatio="none" v-html="icons[n]"></svg></button>
        <hr />
        <div class="layouts">
          <button v-for="l in layouts" :key="l.name" :aria-label="l.name"><svg viewBox="0 0 60 56" preserveAspectRatio="none" v-html="l.art"></svg></button>
        </div>
        <button class="more" aria-label="More layouts"><svg viewBox="0 0 12 8"><path d="M0 1H12L6 7Z" fill="#d0d0d0" /></svg></button>
        <svg class="logo" viewBox="0 0 64 58">
          <path d="M0 19L32 0L64 19V58H51V26L32 8L13 26V58H0Z" fill="#1fc4c0" />
          <path d="M0 19L12 27V58H0Z" fill="#22efe8" />
          <path d="M64 19L51 27V58H64Z" fill="#129a98" />
          <path d="M0 19L32 0L12 27L19 42Z" fill="#14a09d" />
          <path d="M64 19L32 0L52 27L45 42Z" fill="#0f7775" />
          <path d="M12 25L32 0L19 34V42Z" fill="#0a5453" />
          <path d="M52 25L32 0L45 34V42Z" fill="#0a4a49" />
          <path d="M32 0L45 34L32 45L19 34Z" fill="#158583" />
          <path d="M19 34L32 45L45 34V42L32 57L17 40Z" fill="#1fd0cb" />
        </svg>
      </aside>

      <section class="panel">
        <nav class="menu"><button v-for="m in panelMenus" :key="m">{{ m }}</button></nav>
        <div class="view-bar">
          <template v-for="(g, i) in viewGroups" :key="i">
            <i class="bar small"></i>
            <div class="group"><button v-for="n in g" :key="n" class="vb" :class="{ on: active.includes(n) }" :aria-label="n"><svg viewBox="0 0 38 38" v-html="icons[n]"></svg></button></div>
          </template>
          <i class="bar small last"></i>
          <button class="vb" aria-label="Exposure"><svg viewBox="0 0 38 38" v-html="icons.exposure"></svg></button>
          <input class="field num" aria-label="Exposure value" value="0.00" />
          <button class="vb" aria-label="Gamma"><svg viewBox="0 0 38 38" v-html="icons.gamma"></svg></button>
          <input class="field num" aria-label="Gamma value" value="1.00" />
          <button class="vb on" aria-label="View transform"><svg viewBox="0 0 38 38" v-html="icons.on"></svg></button>
          <div class="combo space">
            <select aria-label="Color space"><option>sRGB gamma</option></select>
            <svg viewBox="0 0 40 34"><path d="M10 11H30L20 22Z" fill="#bdbdbd" /></svg>
          </div>
        </div>
        <div class="canvas">
          <svg class="scene" viewBox="92 280 2784 1266" preserveAspectRatio="xMidYMax slice" shape-rendering="crispEdges">
            <path :d="sphere" fill="none" stroke="#000060" stroke-width="2" />
            <g fill="#000060">
              <rect x="1311" y="1050" width="335" height="2" />
              <rect v-for="(r, i) in ribs" :key="i" :x="r[0]" y="1051" :width="r[1]" height="104" />
              <rect x="1418" y="1082" width="138" height="3" />
              <rect v-for="(r, i) in core" :key="i" :x="r[0]" :y="r[1] > 10 ? 1096 : 1083" :width="r[1]" :height="r[1] > 10 ? 59 : 72" />
            </g>
            <rect x="92" y="1098" width="2784" height="2" fill="#003f14" />
            <g fill="#000060"><rect v-for="(b, i) in blocks" :key="i" :x="b[0]" :y="b[1]" :width="b[2]" :height="b[3]" /></g>
            <path d="M1480 1147H1484M1488 1147L1492 1150M1494 1145L1498 1142M1472 1167L1477 1161M1478 1159L1480 1163H1490L1493 1159M1485 1163V1169M1493 1162L1498 1167" fill="none" stroke="#a32a0a" stroke-width="2" />
            <path d="M143 1468V1496" stroke="#0f0" stroke-width="2" />
            <path d="M143 1495H170" stroke="#f00" stroke-width="2" />
            <g class="axis" text-anchor="middle">
              <text x="143" y="1460" fill="#0f0">y</text>
              <text x="143" y="1491" fill="#00f">z</text>
              <text x="175" y="1491" fill="#f00">x</text>
            </g>
          </svg>
          <span class="cam-name">front</span>
          <dl class="hud">
            <dt>Playback Speed:</dt><dd>Every Frame</dd>
            <dt>Current Character:</dt><dd>No Character</dd>
            <dt>IK Blend:</dt><dd>No Solver</dd>
          </dl>
        </div>
      </section>
    </main>

    <footer class="bottom">
      <div class="row time">
        <i class="grip"></i>
        <div class="track">
          <div class="now">1</div>
          <div class="ticks"><div v-for="f in frames" :key="f" class="tick"><span>{{ f }}</span></div></div>
        </div>
        <input class="field frame" aria-label="Current frame" value="1" />
        <div class="group play"><button v-for="n in playback" :key="n" class="pb" :aria-label="n"><svg viewBox="0 0 44 40" v-html="icons[n]"></svg></button></div>
      </div>
      <div class="row range">
        <i class="grip"></i>
        <input class="field" aria-label="Animation start" value="1" />
        <input class="field" aria-label="Playback start" value="1" />
        <div class="slider">
          <div class="span"><i></i><span>1</span><span class="to">120</span><i></i></div>
        </div>
        <input class="field" aria-label="Playback end" value="120" />
        <input class="field" aria-label="Animation end" value="200" />
        <svg class="drop" viewBox="0 0 20 14"><path d="M1 1H19L10 13Z" fill="#555" stroke="#8a8a8a" stroke-width="1" /></svg>
        <button class="outlined">No Anim Layer</button>
        <svg class="drop second" viewBox="0 0 20 14"><path d="M1 1H19L10 13Z" fill="#555" stroke="#8a8a8a" stroke-width="1" /></svg>
        <button class="outlined">No Character Set</button>
        <button class="rb" aria-label="Auto keyframe"><svg viewBox="0 0 40 40" v-html="icons.autoKey"></svg></button>
        <button class="rb" aria-label="Animation preferences"><svg viewBox="0 0 42 40" v-html="icons.prefs"></svg></button>
      </div>
      <div class="row command">
        <i class="grip"></i>
        <label for="mel">MEL</label>
        <input id="mel" class="field" />
        <i class="split"></i>
        <output class="result"></output>
        <button class="sb" aria-label="Script editor"><svg viewBox="0 0 38 38" v-html="icons.script"></svg></button>
      </div>
      <div class="help">
        <i class="grip"></i>
        <span>Select Tool: select an object</span>
        <svg class="resize" viewBox="0 0 26 28"><path d="M0 28L26 0V28Z" fill="#222" /><path d="M4 28L26 4M11 28L26 12M18 28L26 20" stroke="#999" stroke-width="2" /></svg>
      </div>
    </footer>
  </div>
</template>

<style>
body { margin: 0; background: #000; }
</style>

<style scoped>
.app {
  display: flex; flex-direction: column; min-height: 100vh; box-sizing: border-box;
  background: #444; color: #c8c8c8; border-radius: 0 0 8px 8px; overflow: hidden;
  font: 22px/28px "Noto Sans", "Open Sans", sans-serif;
}
.app *, .app *::before { box-sizing: border-box; }
button, input, select { font: inherit; color: inherit; margin: 0; padding: 0; border: 0; background: none; border-radius: 0; }
button { display: flex; align-items: center; justify-content: center; flex: none; white-space: nowrap; }
svg { display: block; width: 100%; height: 100%; }
button svg { filter: drop-shadow(0 0 1px #2c2c2c) drop-shadow(0 0 1px #383838); }
.group { display: flex; gap: 2px; flex: none; }

.grip {
  flex: none; width: 9px; margin-left: 13px; align-self: stretch;
  background: repeating-linear-gradient(to right, #8c8c8c 0 3px, transparent 3px 6px);
  mask-image: repeating-linear-gradient(#000 0 3px, transparent 3px 6px);
}
.grip.flat { width: 78px; height: 9px; margin: 0 0 10px 7px; align-self: auto; }
.bar { flex: none; position: relative; width: 8px; height: 40px; margin: 0 19px; background: linear-gradient(#959595 0 0) center / 2px 100% no-repeat, linear-gradient(#959595 0 0) center / 6px 20px no-repeat; }
.bar.small { width: 6px; height: 34px; margin: 0 9px; background-size: 2px 100%, 6px 20px; }
.chev { flex: none; width: 8px; height: 40px; margin: 0 18px 0 19px; background: #8c8c8c; clip-path: polygon(0 0, 2px 0, 2px 10px, 100% 50%, 2px 30px, 2px 100%, 0 100%); }

.status-line { display: flex; align-items: center; height: 60px; padding: 4px 6px 12px 0; }
.status-line .grip { margin-top: 3px; margin-bottom: 1px; }
.tb { width: 44px; height: 44px; border-radius: 5px; }
.on { background: #5285a6; }
.combo { display: grid; background: #5d5d5d; border-radius: 4px; overflow: hidden; }
.combo select, .combo svg { grid-area: 1 / 1; }
.combo select { appearance: none; width: 100%; color: #eee; }
.combo svg { justify-self: end; border-left: 2px solid #444; pointer-events: none; width: 41px; }
.mode { width: 196px; height: 40px; margin-left: 14px; }
.mode select { padding-left: 6px; padding-top: 1px; }
.outlined { border: 2px solid #515151; border-radius: 4px; background: #404040; height: 46px; width: 203px; justify-content: flex-start; padding-left: 9px; padding-top: 2px; }
.live { height: 44px; width: 198px; margin-left: 3px; }
.end { margin-left: auto; }

.shelf { display: flex; height: 132px; }
.shelf .grip { margin-top: 3px; margin-bottom: 6px; }
.shelf-side { width: 40px; margin-left: 14px; background: #363636; display: flex; flex-direction: column; justify-content: space-between; align-items: center; padding: 22px 0 20px; }
.shelf-side button { width: 20px; height: 20px; }
.shelf-main { flex: 1; min-width: 0; margin: 2px 6px 0 7px; display: flex; flex-direction: column; }
.tabs { display: flex; gap: 2px; height: 41px; }
.tab { height: 41px; padding: 4px 25px 0 24px; background: #363636; color: #a8a8a8; border-radius: 5px 5px 0 0; }
.tab.current { background: #6b6b6b; color: #f0f0f0; padding-top: 0; }
.tab.marked { padding: 0; gap: 11px; border-radius: 0; }
.tab.marked span { padding-top: 4px; }
.bracket { width: 14px; height: 42px; }
.shelf-body { flex: 1; display: flex; align-items: center; border: 3px solid #2b2b2b; border-left-width: 1px; padding-left: 9px; }
.shelf-group { display: flex; align-items: center; }
.shelf-group button { width: 70px; height: 68px; }
.shelf-group button svg { width: 52px; height: 52px; overflow: visible; }
.shelf-group + .shelf-group { border-left: 3px solid #999; margin-left: 10px; padding-left: 10px; }
.scroller { margin-left: auto; margin-right: 7px; width: 24px; height: 68px; background: #373737; }

.work { flex: 1; display: flex; margin-top: 3px; border-top: 3px solid #2b2b2b; border-bottom: 2px solid #2b2b2b; }
.toolbox { flex: none; width: 88px; border-right: 3px solid #2b2b2b; padding: 13px 0 12px; display: flex; flex-direction: column; }
.tool { width: 72px; height: 72px; margin: 0 0 2px 8px; border-radius: 5px; }
.toolbox hr { width: 71px; height: 3px; margin: 83px 0 15px 9px; border: 0; background: #999; }
.layouts { display: flex; flex-direction: column; gap: 14px; margin-left: 14px; }
.layouts button { width: 60px; height: 60px; }
.more { width: 60px; height: 60px; margin: 11px 0 0 12px; border: 2px solid #2b2b2b; }
.more svg { width: 12px; height: 8px; }
.logo { width: 64px; height: 58px; margin: auto 0 0 12px; }

.panel { flex: 1; min-width: 0; margin: 2px; border: 2px solid #808080; display: flex; flex-direction: column; }
.menu { display: flex; gap: 32px; height: 38px; padding: 0 0 0 17px; align-items: center; }
.view-bar { display: flex; align-items: center; height: 40px; padding-bottom: 3px; }
.view-bar .bar:first-child { margin-left: 5px; }
.bar.small.last { margin-right: 13px; }
.vb { width: 38px; height: 38px; border-radius: 4px; }
.field { flex: none; width: 137px; height: 45px; background: #2b2b2b; border-radius: 4px; padding: 1px 0 0 12px; color: #c8c8c8; }
.num { width: 76px; height: 30px; padding: 0 0 0 12px; margin: 0 6px 2px 4px; }
.space { width: 286px; height: 34px; margin: 0 0 3px 6px; }
.space select { padding-left: 6px; }
.canvas {
  flex: 1; position: relative; overflow: hidden; min-height: 600px;
  background: linear-gradient(#8a9db5 0%, #75879a 29%, #697888 43%, #5b6978 57%, #4b5662 72%, #323a43 88%, #22262c 94%, #0e0e0f 100%);
}
.scene { position: absolute; inset: 0; }
.axis { font: 700 18px "Liberation Mono", monospace; }
.cam-name, .hud { position: absolute; font-size: 18px; line-height: 40px; font-weight: 700; color: #fff; margin: 0; }
.cam-name { left: 0; right: 20px; bottom: 3px; text-align: center; }
.hud { right: 40px; bottom: 3px; display: grid; grid-template-columns: 230px 140px; }
.hud dd { margin: 0; }

.bottom { flex: none; padding-top: 6px; }
.row { display: flex; align-items: center; }
.time { height: 56px; padding-right: 20px; }
.time .grip { margin-bottom: 6px; }
.track { flex: 1; min-width: 0; height: 56px; margin-left: 12px; background: #2b2b2b; position: relative; overflow-x: clip; overflow-y: visible; }
.now { position: absolute; left: 13px; top: 0; width: 16px; height: 56px; background: #555; color: #fff; text-align: center; padding-top: 26px; font-size: 21px; }
.ticks { display: flex; height: 100%; margin-left: 88px; }
.tick { flex: none; width: 4.29%; color: #808080; font-size: 21px; line-height: 22px; padding-left: 4px; background: linear-gradient(#808080 0 0) 0 100% / 3px 30px no-repeat; }
.frame { height: 37px; margin-left: 13px; }
.play { margin-left: 14px; }
.pb { width: 44px; height: 40px; }
.range { height: 48px; margin-top: 16px; padding-right: 22px; }
.range .field { margin-left: 15px; }
.range .grip { margin-bottom: 4px; }
.range .grip + .field { margin-left: 13px; }
.slider { flex: 1; min-width: 0; height: 44px; margin: 0 -2px 0 14px; padding: 4px 8px; background: #373737; }
.span { width: 61.3%; height: 36px; background: #5d5d5d; border-radius: 3px; display: flex; align-items: center; padding: 0 6px 0 8px; gap: 7px; }
.span i { width: 25px; height: 24px; background: #919191; border-radius: 5px; }
.span span { padding-top: 1px; }
.to { margin-left: auto; }
.drop { flex: none; width: 20px; height: 14px; margin: 0 14px 6px 11px; }
.drop.second { margin-left: 21px; }
.rb { width: 40px; height: 40px; margin-left: 14px; }
.rb + .rb { margin-left: 18px; }
.command { height: 50px; margin-top: 16px; padding-right: 16px; }
.command .grip { margin-bottom: 4px; }
.command label { width: 69px; margin-left: 34px; padding-top: 1px; color: #eee; }
.command .field { width: 615px; height: 47px; }
.split { width: 2px; height: 50px; margin: 0 11px 0 1px; background: #2b2b2b; }
.result { flex: 1; align-self: stretch; background: #2b2b2b; margin-right: 12px; }
.sb { width: 38px; height: 38px; }
.help { display: flex; align-items: center; height: 48px; margin-top: 8px; border-top: 2px solid #2b2b2b; color: #b8b8b8; font-size: 21px; }
.help .grip { margin-top: 5px; margin-bottom: 12px; }
.help span { margin-left: 35px; }
.resize { width: 26px; height: 28px; margin: 12px 4px 0 auto; }
</style>
